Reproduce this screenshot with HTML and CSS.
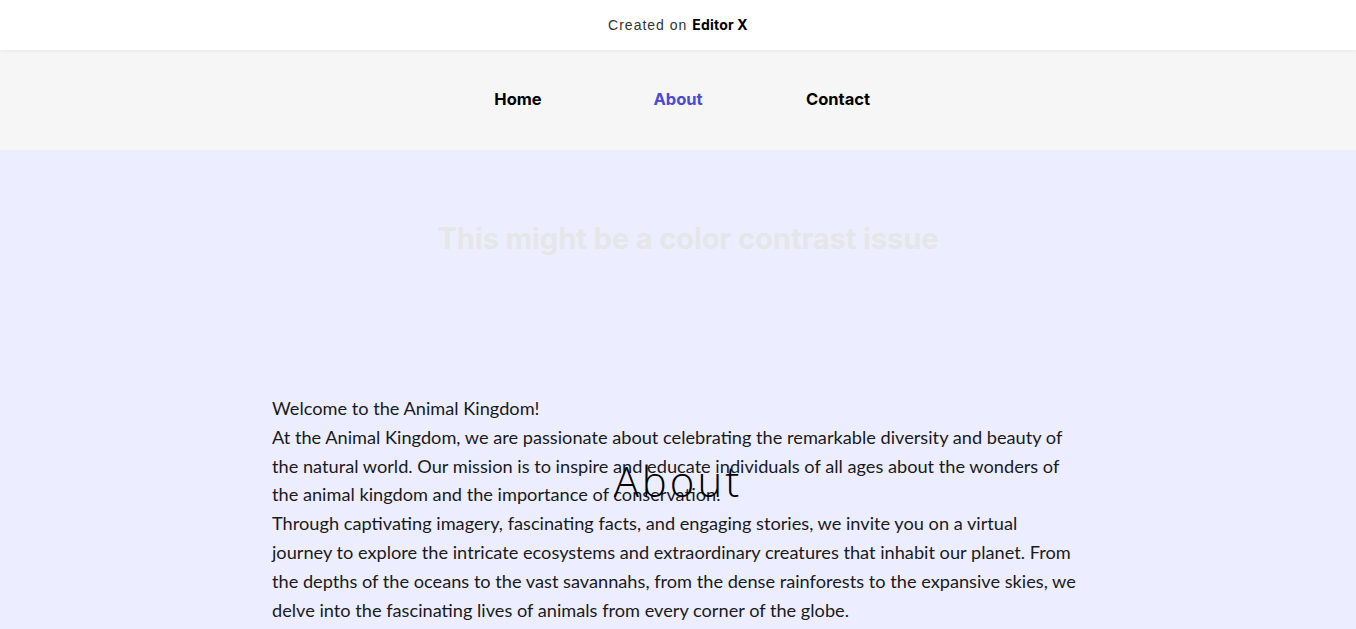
FILE: index.html
```html
<!DOCTYPE html>
<html lang="en">
<head>
<meta charset="utf-8">
<title>About</title>
<link rel="stylesheet" href="styles.css">
</head>
<body>
<header class="topbar">
  <span class="created">Created on <b>Editor X</b></span>
</header>
<nav class="nav">
  <a class="nav-item" href="#">Home</a>
  <a class="nav-item active" href="#">About</a>
  <a class="nav-item" href="#">Contact</a>
</nav>
<main class="main">
  <h2 class="warning">This might be a color contrast issue</h2>
  <section class="content">
    <div class="text">
      <p>Welcome to the Animal Kingdom!</p>
      <p>At the Animal Kingdom, we are passionate about celebrating the remarkable diversity and beauty of the natural world. Our mission is to inspire and educate individuals of all ages about the wonders of the animal kingdom and the importance of conservation.</p>
      <p>Through captivating imagery, fascinating facts, and engaging stories, we invite you on a virtual journey to explore the intricate ecosystems and extraordinary creatures that inhabit our planet. From the depths of the oceans to the vast savannahs, from the dense rainforests to the expansive skies, we delve into the fascinating lives of animals from every corner of the globe.</p>
    </div>
    <h1 class="about-title">About</h1>
  </section>
</main>
</body>
</html>
```
FILE: styles.css
```css
* { box-sizing: border-box; }
html, body { margin: 0; padding: 0; }
body {
  background: #eceeff;
  font-family: "Lato", "Open Sans", sans-serif;
  overflow: hidden;
}
.topbar {
  height: 50px;
  background: #ffffff;
  display: flex;
  align-items: center;
  justify-content: center;
  box-shadow: 0 1px 4px rgba(0,0,0,0.06);
  position: relative;
  z-index: 2;
}
.created {
  font-family: "Liberation Sans", "Inter", sans-serif;
  font-size: 14px;
  letter-spacing: 1px;
  color: #333;
  margin-top: -2px;
}
.created b {
  font-family: "Inter", sans-serif;
  font-weight: 700;
  color: #000;
  letter-spacing: 0.2px;
}
.nav {
  height: 100px;
  background: #f6f6f6;
  display: flex;
  justify-content: center;
  align-items: center;
}
.nav-item {
  width: 160px;
  text-align: center;
  font-family: "Inter", sans-serif;
  font-weight: 700;
  font-size: 16.5px;
  color: #000;
  text-decoration: none;
  margin-top: -2px;
}
.nav-item.active { color: #4a4ad6; }
.main {
  display: flex;
  flex-direction: column;
  align-items: center;
}
.warning {
  margin: 70px 0 0 20px;
  font-family: "Inter", sans-serif;
  font-weight: 700;
  font-size: 29.3px;
  letter-spacing: -0.2px;
  color: #e6e6e8;
  line-height: 38px;
}
.content {
  position: relative;
  width: 812px;
  padding-right: 7px;
  margin-top: 136px;
}
.text p {
  margin: 0;
  font-size: 18.2px;
  line-height: 28.8px;
  color: #1a1a1a;
}
.about-title {
  position: absolute;
  left: 0;
  right: 0;
  top: 59px;
  margin: 0;
  text-align: center;
  font-family: "Open Sans", sans-serif;
  font-weight: 300;
  font-size: 42px;
  letter-spacing: 3px;
  line-height: 56px;
  color: #000;
}
```
